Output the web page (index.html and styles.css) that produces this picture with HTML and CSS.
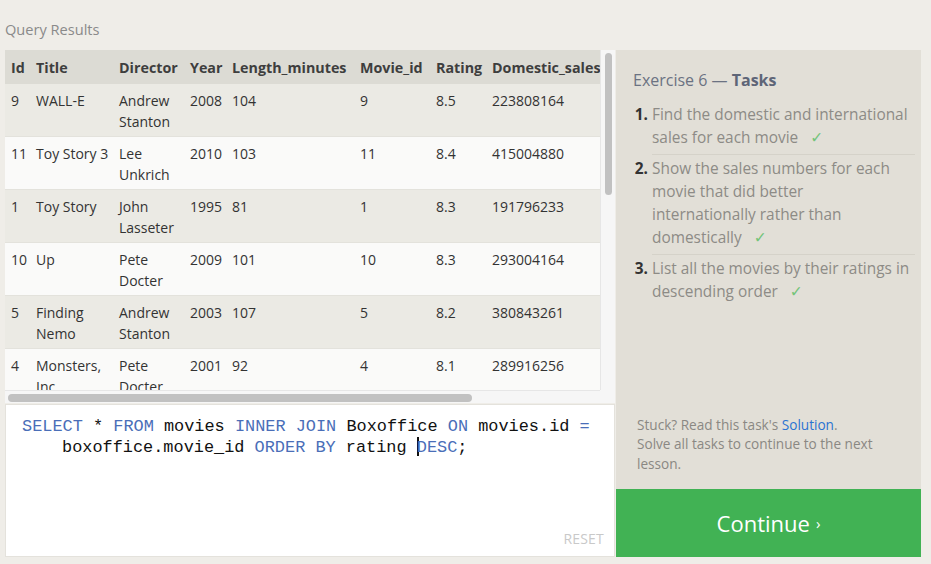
FILE: index.html
```html
<!DOCTYPE html>
<html lang="en">
<head>
<meta charset="utf-8">
<title>Exercise 6 — Tasks</title>
<link rel="stylesheet" href="styles.css">
</head>
<body>
<div class="page">
  <div class="section-title">Query Results</div>
  <div class="main">
    <div class="left">
      <div class="results">
        <div class="viewport">
          <table class="grid">
            <colgroup>
              <col class="c-id"><col class="c-title"><col class="c-director"><col class="c-year"><col class="c-length"><col class="c-movie"><col class="c-rating"><col class="c-dom"><col class="c-int">
            </colgroup>
            <thead>
              <tr><th>Id</th><th>Title</th><th>Director</th><th>Year</th><th>Length_minutes</th><th>Movie_id</th><th>Rating</th><th>Domestic_sales</th><th>International_sales</th></tr>
            </thead>
            <tbody>
              <tr><td>9</td><td>WALL-E</td><td>Andrew<br>Stanton</td><td>2008</td><td>104</td><td>9</td><td>8.5</td><td>223808164</td><td>297503696</td></tr>
              <tr><td>11</td><td>Toy Story 3</td><td>Lee<br>Unkrich</td><td>2010</td><td>103</td><td>11</td><td>8.4</td><td>415004880</td><td>648167031</td></tr>
              <tr><td>1</td><td>Toy Story</td><td>John<br>Lasseter</td><td>1995</td><td>81</td><td>1</td><td>8.3</td><td>191796233</td><td>170162503</td></tr>
              <tr><td>10</td><td>Up</td><td>Pete<br>Docter</td><td>2009</td><td>101</td><td>10</td><td>8.3</td><td>293004164</td><td>438338580</td></tr>
              <tr><td>5</td><td>Finding<br>Nemo</td><td>Andrew<br>Stanton</td><td>2003</td><td>107</td><td>5</td><td>8.2</td><td>380843261</td><td>555900000</td></tr>
              <tr><td>4</td><td>Monsters,<br>Inc.</td><td>Pete<br>Docter</td><td>2001</td><td>92</td><td>4</td><td>8.1</td><td>289916256</td><td>272900000</td></tr>
              <tr><td>7</td><td>Ratatouille</td><td>Brad<br>Bird</td><td>2007</td><td>115</td><td>7</td><td>8.0</td><td>206445654</td><td>417277164</td></tr>
              <tr><td>12</td><td>Brave</td><td>Brenda<br>Chapman</td><td>2012</td><td>102</td><td>12</td><td>7.2</td><td>237283207</td><td>301700000</td></tr>
            </tbody>
          </table>
        </div>
        <div class="vscroll"><div class="vthumb"></div></div>
        <div class="hscroll"><div class="hthumb"></div></div>
        <div class="corner"></div>
      </div>
      <div class="editor">
        <div class="code"><span class="kw">SELECT</span> * <span class="kw">FROM</span> movies <span class="kw">INNER JOIN</span> Boxoffice <span class="kw">ON</span> movies.id <span class="kw">=</span><br><span class="indent">boxoffice.movie_id <span class="kw">ORDER BY</span> rating <span class="caret"></span><span class="kw">DESC</span>;</span></div>
        <div class="reset">RESET</div>
      </div>
    </div>
    <div class="right">
      <div class="tasks">
        <h2 class="tasks-title">Exercise 6 — <b>Tasks</b></h2>
        <ol class="task-list">
          <li>Find the domestic and international<br>sales for each movie <span class="check">✓</span></li>
          <li>Show the sales numbers for each<br>movie that did better<br>internationally rather than<br>domestically <span class="check">✓</span></li>
          <li>List all the movies by their ratings in<br>descending order <span class="check">✓</span></li>
        </ol>
        <p class="stuck">Stuck? Read this task's <a href="#" class="link">Solution</a>.<br>Solve all tasks to continue to the next<br>lesson.</p>
      </div>
      <div class="continue">Continue <span class="chev">›</span></div>
    </div>
  </div>
</div>
</body>
</html>
```

FILE: styles.css
```css
* { box-sizing: border-box; }
html, body { margin: 0; padding: 0; }
body {
  background: #efede8;
  font-family: "Open Sans", "DejaVu Sans", sans-serif;
  color: #333;
  width: 931px;
  height: 564px;
  overflow: hidden;
}
.page {
  padding: 0 10px 7px 5px;
  display: flex;
  flex-direction: column;
  height: 564px;
}
.section-title {
  height: 50px;
  padding-top: 19px;
  font-size: 14.6px;
  line-height: 20px;
  color: #8a8a8a;
}
.main {
  display: grid;
  grid-template-columns: 610px 305px;
  column-gap: 1px;
  flex: 1;
  min-height: 0;
}
.left {
  display: flex;
  flex-direction: column;
  gap: 1px;
  min-height: 0;
}
.results {
  display: grid;
  grid-template-columns: 595px 15px;
  grid-template-rows: 340px 13px;
  background: #fff;
}
.viewport {
  overflow: hidden;
  background: #fafaf9;
}
.grid {
  border-collapse: collapse;
  table-layout: fixed;
  width: 761px;
  font-size: 14px;
  line-height: 21px;
  white-space: nowrap;
}
.c-id { width: 25px; }
.c-title { width: 83px; }
.c-director { width: 71px; }
.c-year { width: 42px; }
.c-length { width: 128px; }
.c-movie { width: 76px; }
.c-rating { width: 56px; }
.c-dom { width: 130px; }
.c-int { width: 150px; }
.grid th {
  text-align: left;
  font-weight: 700;
  font-size: 14.3px;
  color: #3e3e3e;
  background: #dcdbd4;
  height: 34px;
  padding: 0 6px;
  overflow: hidden;
}
.grid td {
  vertical-align: top;
  padding: 6px 6px 4px;
  color: #333;
  border-bottom: 1px solid #e3e2dc;
  overflow: hidden;
}
.grid tbody tr:nth-child(odd) td { background: #ebeae4; }
.grid tbody tr:nth-child(even) td { background: #fafaf9; }
.vscroll {
  background: #f6f6f6;
  border-left: 1px solid #e6e6e6;
  padding: 3px 3px 0 4px;
}
.vthumb {
  height: 142px;
  background: #c1c1c1;
  border-radius: 4px;
}
.hscroll {
  background: #f6f6f6;
  border-top: 1px solid #e6e6e6;
  padding: 3px 0 0 3px;
}
.hthumb {
  width: 464px;
  height: 8px;
  background: #c1c1c1;
  border-radius: 4px;
}
.corner { background: #f6f6f6; }
.editor {
  flex: 1;
  background: #fff;
  border: 1px solid #e4e2dc;
  display: flex;
  flex-direction: column;
  padding: 12px 10px 8px 16px;
}
.code {
  flex: 1;
  font-family: "Liberation Mono", "DejaVu Sans Mono", monospace;
  font-size: 16.9px;
  line-height: 20px;
  color: #111;
  white-space: pre;
}
.kw { color: #4a6eb8; }
.indent { padding-left: 40px; }
.caret {
  display: inline-block;
  width: 2px;
  height: 19px;
  background: #111;
  vertical-align: -4px;
  margin-right: -2px;
}
.reset {
  align-self: flex-end;
  font-size: 14px;
  color: #c9c9c9;
  letter-spacing: 0.2px;
}
.right {
  display: flex;
  flex-direction: column;
  min-height: 0;
}
.tasks {
  flex: 1;
  background: #e2dfd7;
  padding: 20px 6px 16px 17px;
  display: flex;
  flex-direction: column;
}
.tasks-title {
  margin: 0 0 11px;
  font-size: 16px;
  line-height: 20px;
  font-weight: 400;
  color: #6b7282;
}
.tasks-title b { font-weight: 700; color: #5e6577; }
.task-list {
  margin: 0;
  padding: 0 0 0 19px;
  font-size: 15.4px;
  line-height: 22.7px;
  color: #8d8b86;
}
.task-list li {
  padding: 3px 0 5px;
  border-bottom: 1px solid #d5d2c9;
}
.task-list li:last-child { border-bottom: none; }
.task-list li::marker {
  color: #333;
  font-weight: 700;
}
.check {
  color: #74c47a;
  margin-left: 8px;
}
.stuck {
  margin: auto 0 0;
  padding-left: 4px;
  font-size: 13.6px;
  line-height: 19.5px;
  color: #8a8883;
}
.link { color: #2b73d2; text-decoration: none; }
.continue {
  height: 68px;
  background: #41b254;
  color: #fff;
  font-size: 22px;
  display: flex;
  align-items: center;
  justify-content: center;
}
.chev { font-size: 15px; margin-left: 6px; }
```
